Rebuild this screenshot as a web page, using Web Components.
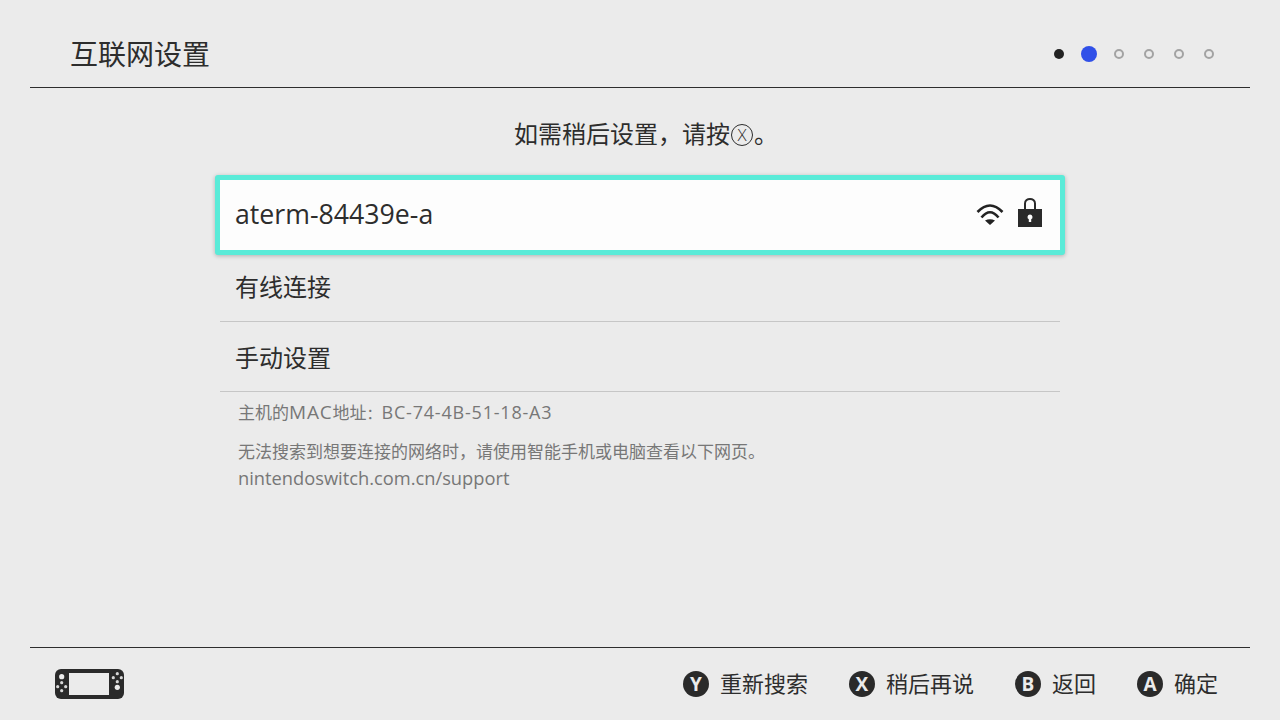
<!DOCTYPE html>
<html lang="zh-CN">
<head>
<meta charset="utf-8">
<title>互联网设置</title>
<style>
  html, body {
    margin: 0;
    height: 720px;
    overflow: hidden;
    background: #ebebeb;
    color: #2d2d2d;
    font-family: "Open Sans", "Noto Sans CJK SC", sans-serif;
  }
  body { display: flex; flex-direction: column; }
  main { flex: 1; display: flex; flex-direction: column; min-height: 0; }
  .prompt { text-align: center; font-size: 24px; line-height: 34px; height: 34px; padding: 29px 0 24px 12px; }
  .lat { display: block; font-size: 18.3px; }
  .mac-id { font-size: 18px; letter-spacing: .8px; }
  .mac-word { font-size: 19px; letter-spacing: .8px; }
  .colon { font-size: 15px; }
  .x-glyph { display: inline-flex; box-sizing: border-box; width: 22px; height: 22px; margin: 0 1px; border: 1.5px solid #2d2d2d; border-radius: 50%; align-items: center; justify-content: center; font-size: 17px; font-weight: 300; line-height: 1; vertical-align: 2px; }
</style>
</head>
<body>
<template id="step-dots-tpl">
  <style>
    :host { display: flex; }
    span { width: 30px; height: 30px; display: flex; align-items: center; justify-content: center; }
    i { display: block; box-sizing: border-box; width: 10px; height: 10px; border-radius: 50%; border: 2px solid #a3a3a3; }
    .done i { background: #222; border: 0; }
    .now i { width: 16px; height: 16px; background: #3050e8; border: 0; }
  </style>
  <span class="done"><i></i></span><span class="now"><i></i></span><span><i></i></span><span><i></i></span><span><i></i></span><span><i></i></span>
</template>
<template id="page-header-tpl">
  <style>
    :host { display: flex; align-items: center; justify-content: space-between; box-sizing: border-box; height: 88px; margin: 0 30px; padding: 21px 26px 0 40px; border-bottom: 1px solid #2d2d2d; font-size: 28px; }
    .title { margin-bottom: 3px; }
  </style>
  <div class="title"><slot></slot></div>
  <step-dots></step-dots>
</template>
<template id="net-row-tpl">
  <style>
    :host { display: flex; align-items: center; justify-content: space-between; box-sizing: border-box; height: 70px; padding: 0 15px; border-bottom: 1px solid #c6c6c6; font-size: 24px; }
    :host([selected]) { margin: 0 -5px; height: 80px; padding: 0 18px 4px 15px; border: 5px solid #5aebd8; border-radius: 3px; background: #fdfdfd; font-size: 26.7px; box-shadow: 0 1px 4px rgba(0,0,0,.25); }
    .icons { display: flex; align-items: center; gap: 13px; }
  </style>
  <div><slot></slot></div>
  <div class="icons"><slot name="icons"></slot></div>
</template>
<template id="net-list-tpl">
  <style>
    :host { display: block; width: 840px; margin: 0 auto; }
  </style>
  <slot></slot>
</template>
<template id="foot-hint-tpl">
  <style>
    :host { display: flex; align-items: center; gap: 11px; font-size: 22px; line-height: 30px; }
    b { width: 26px; height: 26px; border-radius: 50%; background: #2a2a2a; color: #ebebeb; display: flex; align-items: center; justify-content: center; font: 700 19px "Open Sans", sans-serif; }
    span { margin-bottom: 2px; }
  </style>
  <b id="key"></b><span><slot></slot></span>
</template>
<template id="page-footer-tpl">
  <style>
    :host { display: flex; align-items: center; justify-content: space-between; height: 72px; margin: 0 30px; padding: 0 32px 0 25px; border-top: 1px solid #2d2d2d; }
    .hints { display: flex; gap: 41px; }
    svg { display: block; }
  </style>
  <svg width="69" height="30" viewBox="0 0 69 30">
    <rect width="69" height="30" rx="6" fill="#2a2a2a"/>
    <rect x="14" y="4" width="40" height="22" fill="#ebebeb"/>
    <circle cx="6.700" cy="7.700" r="2.600" fill="#ebebeb"/>
    <g fill="#d8d8d8">
      <circle cx="6.700" cy="13.700" r="1.600"/><circle cx="6.700" cy="21.700" r="1.600"/><circle cx="2.700" cy="17.700" r="1.600"/><circle cx="10.700" cy="17.700" r="1.600"/>
      <circle cx="62.300" cy="4.700" r="1.600"/><circle cx="62.300" cy="12.700" r="1.600"/><circle cx="58.300" cy="8.700" r="1.600"/><circle cx="66.300" cy="8.700" r="1.600"/>
    </g>
    <circle cx="62.300" cy="18.300" r="2.600" fill="#ebebeb"/>
  </svg>
  <div class="hints"><slot></slot></div>
</template>
<template id="help-notes-tpl">
  <style>
    :host { display: block; width: 840px; margin: 0 auto; padding: 7px 18px 0; box-sizing: border-box; color: #777; font-size: 17px; line-height: 26px; }
    .mac { margin-bottom: 13px; }
  </style>
  <div class="mac"><slot name="mac"></slot></div>
  <div><slot></slot></div>
</template>

<page-header>互联网设置</page-header>
<main>
  <div class="prompt">如需稍后设置，请按<span class="x-glyph">X</span>。</div>
  <net-list>
    <net-row selected>aterm-84439e-a
      <svg slot="icons" width="30" height="24" viewBox="0 0 30 24" fill="none" stroke="#222" stroke-width="2.600">
        <path d="M2.500 11Q15 -2 27.500 11"/>
        <path d="M6.500 16.500Q15 6 23.500 16.500"/>
        <path d="M10 19.500Q15 17 20 19.500L15 24Z" fill="#222" stroke="none"/>
      </svg>
      <svg slot="icons" width="24" height="30" viewBox="0 0 24 30" style="margin-bottom:2px">
        <path d="M7 13V6.500C7 .5 17 .5 17 6.500V13" fill="none" stroke="#2a2a2a" stroke-width="2"/>
        <path fill-rule="evenodd" fill="#2a2a2a" d="M0 12H24V30H0ZM12 17.500A2.500 2.500 0 0 0 10.800 22.200V25H13.200V22.200A2.500 2.500 0 0 0 12 17.500Z"/>
      </svg>
    </net-row>
    <net-row style="height:67px;padding-bottom:5px">有线连接</net-row>
    <net-row>手动设置</net-row>
  </net-list>
  <help-notes>
    <span slot="mac">主机的<span class="mac-word">MAC</span>地址<span class="colon">：</span><span class="mac-id">BC-74-4B-51-18-A3</span></span>
    无法搜索到想要连接的网络时，请使用智能手机或电脑查看以下网页。<span class="lat">nintendoswitch.com.cn/support</span>
  </help-notes>
</main>
<page-footer>
  <foot-hint key="Y">重新搜索</foot-hint>
  <foot-hint key="X">稍后再说</foot-hint>
  <foot-hint key="B">返回</foot-hint>
  <foot-hint key="A">确定</foot-hint>
</page-footer>

<script>
  function tplElement(name, tplId, onInit) {
    customElements.define(name, class extends HTMLElement {
      constructor() {
        super();
        const shadow = this.attachShadow({ mode: 'open' });
        shadow.appendChild(document.getElementById(tplId).content.cloneNode(true));
        if (onInit) onInit(this, shadow);
      }
    });
  }
  tplElement('step-dots', 'step-dots-tpl');
  tplElement('page-header', 'page-header-tpl');
  tplElement('net-list', 'net-list-tpl');
  tplElement('net-row', 'net-row-tpl');
  tplElement('help-notes', 'help-notes-tpl');
  tplElement('page-footer', 'page-footer-tpl');
  tplElement('foot-hint', 'foot-hint-tpl', (el, shadow) => {
    shadow.getElementById('key').textContent = el.getAttribute('key');
  });
</script>
</body>
</html>
